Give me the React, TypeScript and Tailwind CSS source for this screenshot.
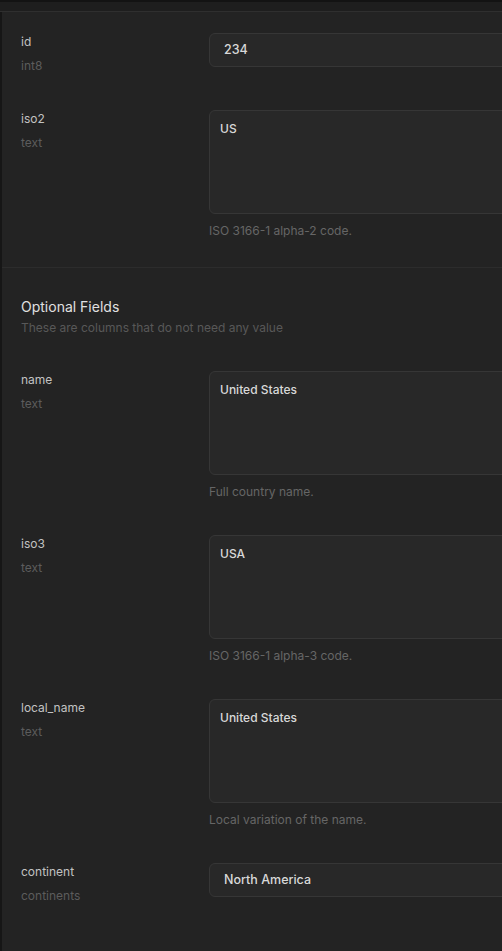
import React from 'react';

interface Field {
  name: string;
  type: string;
  value: string;
  multiline?: boolean;
  help?: string;
}

const required: Field[] = [
  { name: 'id', type: 'int8', value: '234' },
  { name: 'iso2', type: 'text', value: 'US', multiline: true, help: 'ISO 3166-1 alpha-2 code.' },
];

const optional: Field[] = [
  { name: 'name', type: 'text', value: 'United States', multiline: true, help: 'Full country name.' },
  { name: 'iso3', type: 'text', value: 'USA', multiline: true, help: 'ISO 3166-1 alpha-3 code.' },
  { name: 'local_name', type: 'text', value: 'United States', multiline: true, help: 'Local variation of the name.' },
  { name: 'continent', type: 'continents', value: 'North America' },
];

const FieldRow = ({ field }: { field: Field }) => (
  <div className="flex">
    <div className="w-[188px] shrink-0 pt-[1px] flex flex-col gap-2">
      <span className="text-xs leading-4 text-[#c2c2c2]">{field.name}</span>
      <span className="text-xs leading-4 text-[#5c5c5c]">{field.type}</span>
    </div>
    <div className="flex-1">
      {field.multiline ? (
        <div className="h-[104px] rounded-md border border-[#363636] bg-[#282828] px-[10px] pt-[10px] text-xs leading-4 font-medium text-[#d8d8d8]">
          {field.value}
        </div>
      ) : (
        <div className="h-[34px] rounded-md border border-[#363636] bg-[#282828] px-[14px] flex items-center text-[12.5px] font-medium text-[#d8d8d8]">
          {field.value}
        </div>
      )}
      {field.help && (
        <p className="mt-[9px] text-xs leading-4 text-[#666666]">{field.help}</p>
      )}
    </div>
  </div>
);

const App = () => {
  return (
    <div
      className="w-[502px] h-[951px] overflow-hidden bg-[#232323] flex flex-col"
      style={{ fontFamily: 'Inter, "Noto Sans", sans-serif' }}
    >
      <div className="h-[2px] bg-[#131313] shrink-0" />
      <div className="h-[9px] bg-[#1e1e1e] border-b border-[#2f2f2f] shrink-0 box-content" />

      <div className="flex-1 flex border-l-2 border-[#161616]">
        <div className="w-[580px] shrink-0">
          <section className="pl-[19px] pt-[21px] pb-[28px] flex flex-col gap-9 border-b border-[#2c2c2c]">
            {required.map((f) => (
              <FieldRow key={f.name} field={f} />
            ))}
          </section>

          <section className="pl-[19px] pt-[29px] flex flex-col gap-[35px]">
            <div>
              <h3 className="text-sm leading-5 text-[#e0e0e0]">Optional Fields</h3>
              <p className="mt-[3px] text-xs leading-4 text-[#585858]">These are columns that do not need any value</p>
            </div>
            {optional.map((f) => (
              <FieldRow key={f.name} field={f} />
            ))}
          </section>
        </div>
      </div>
    </div>
  );
};

export default App;
